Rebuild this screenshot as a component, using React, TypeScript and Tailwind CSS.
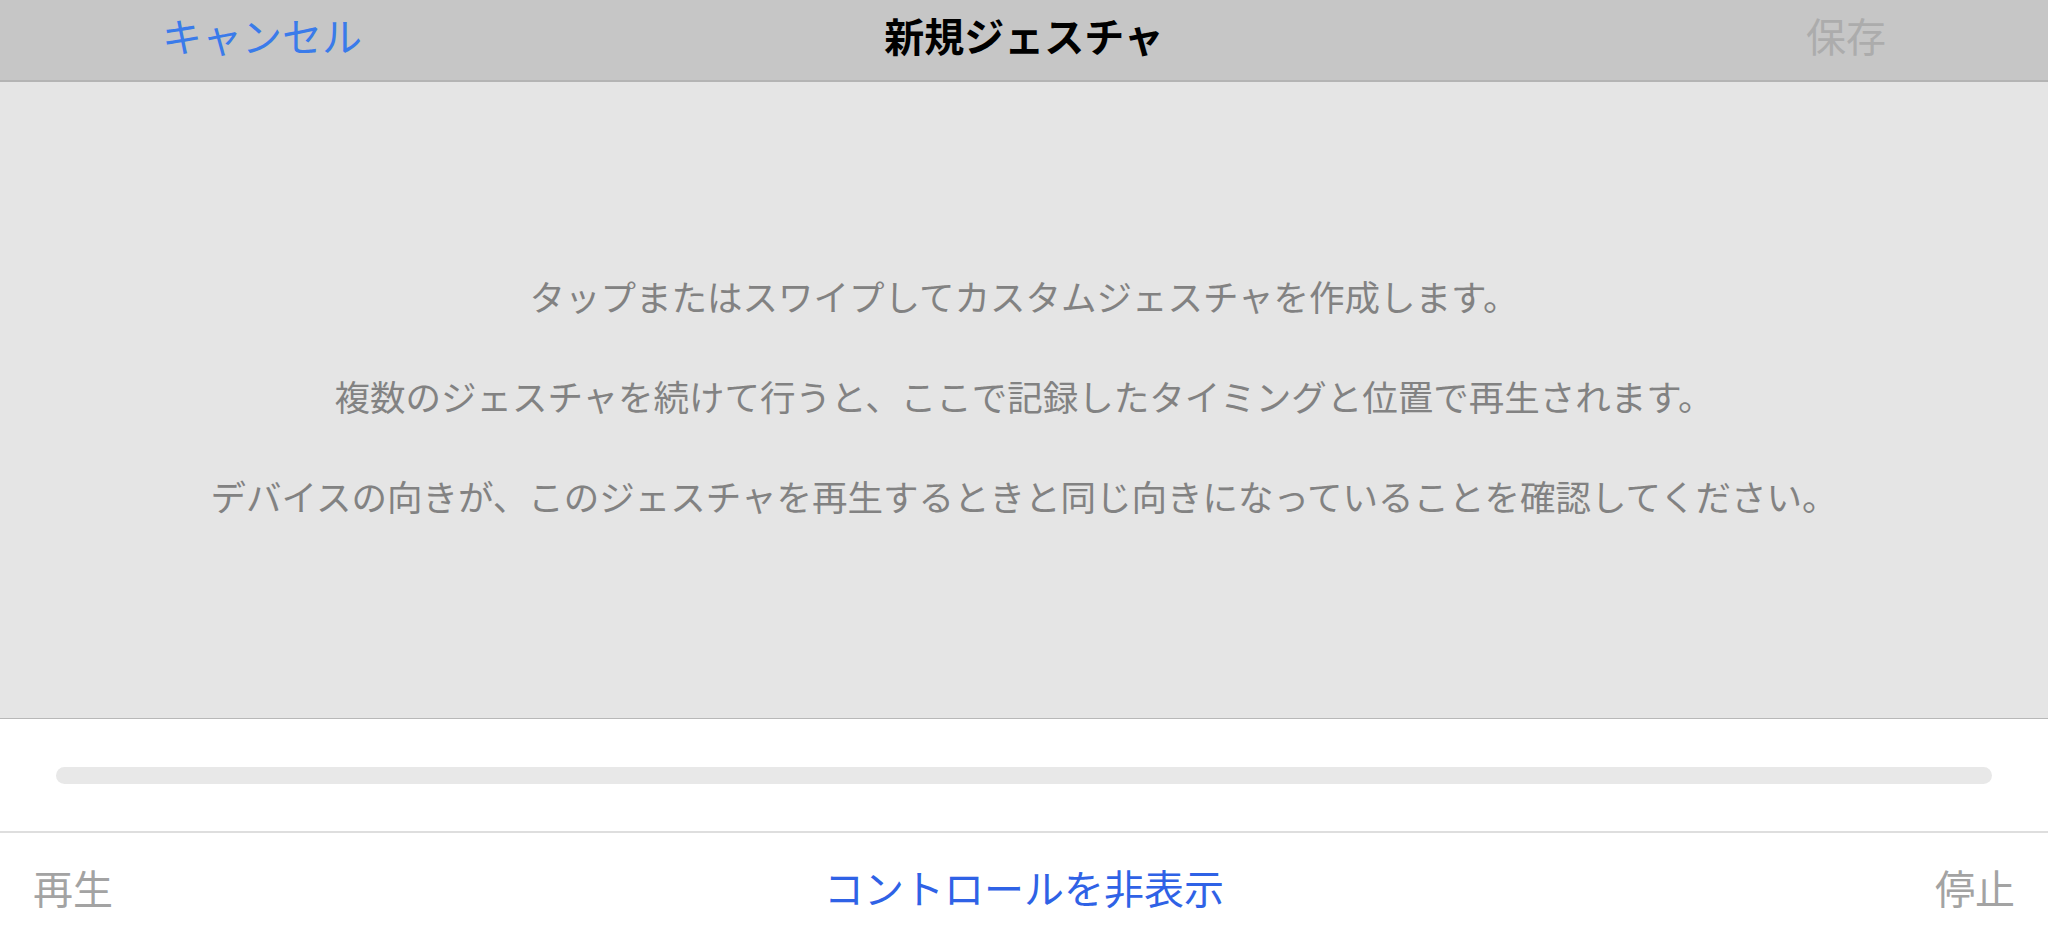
import React from "react";

export default function App() {
  return (
    <div
      className="w-[2048px] h-[945px] flex flex-col overflow-hidden bg-white"
      style={{ fontFamily: '"Noto Sans CJK JP", "Noto Sans", sans-serif' }}
    >
      {/* Navigation bar */}
      <div className="h-[82px] shrink-0 bg-[#c6c6c6] border-b-2 border-[#b4b4b4] grid grid-cols-3 items-center pb-[10px]">
        <div className="pl-[162px] text-[40px] leading-none text-[#3a7bea]">キャンセル</div>
        <div className="text-center text-[40px] leading-none font-bold text-black">新規ジェスチャ</div>
        <div className="pr-[162px] text-right text-[40px] leading-none text-[#acacac]">保存</div>
      </div>

      {/* Instruction area */}
      <div className="h-[637px] shrink-0 bg-[#e5e5e5] border-b border-[#b8b8b8] flex flex-col items-center justify-center gap-[64px] pb-[8px] text-[35.5px] leading-[36px] text-[#828282]">
        <p>タップまたはスワイプしてカスタムジェスチャを作成します。</p>
        <p>複数のジェスチャを続けて行うと、ここで記録したタイミングと位置で再生されます。</p>
        <p>デバイスの向きが、このジェスチャを再生するときと同じ向きになっていることを確認してください。</p>
      </div>

      {/* Progress */}
      <div className="h-[114px] shrink-0 bg-white border-b-2 border-[#dedede] px-[56px] flex items-center">
        <div className="w-full h-[17px] rounded-full bg-[#e8e8e8]" />
      </div>

      {/* Toolbar */}
      <div className="flex-1 bg-white flex items-center justify-between px-[33px] pb-[5px] text-[40px] leading-none">
        <span className="text-[#a3a3a3]">再生</span>
        <span className="text-[#2f62e6]">コントロールを非表示</span>
        <span className="text-[#a3a3a3]">停止</span>
      </div>
    </div>
  );
}
